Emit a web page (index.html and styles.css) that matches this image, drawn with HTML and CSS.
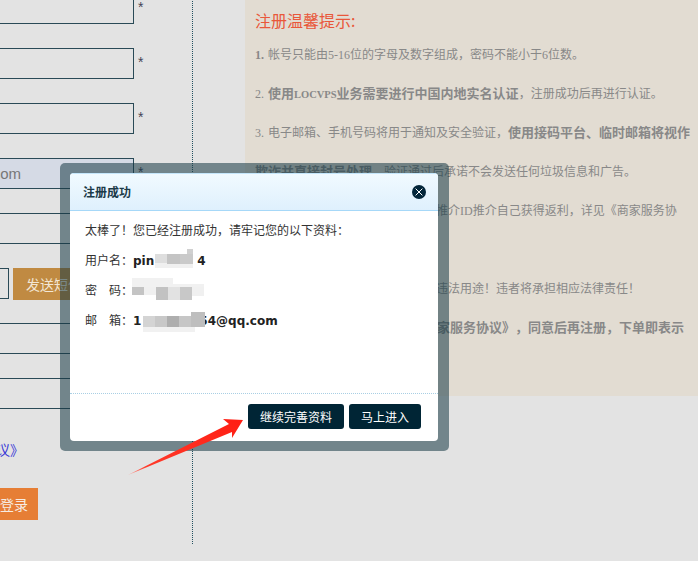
FILE: index.html
```html
<!DOCTYPE html>
<html lang="zh-CN">
<head>
<meta charset="utf-8">
<title>注册成功</title>
<link rel="stylesheet" href="styles.css">
</head>
<body>
<main class="page">
  <section class="form-col">
    <div class="row"><input class="field" type="text"><span class="star">*</span></div>
    <div class="row"><input class="field" type="text"><span class="star">*</span></div>
    <div class="row"><input class="field" type="text"><span class="star">*</span></div>
    <div class="row"><input class="field field-filled" type="text" value="54@qq.com"><span class="star">*</span></div>
    <div class="row"><input class="field" type="text"></div>
    <div class="row"><input class="field field-code" type="text"><button class="send-btn" type="button">发送短信验证码</button></div>
    <div class="row"><input class="field" type="text"></div>
    <div class="row"><input class="field" type="text"></div>
    <div class="agree"><a href="#">《商家服务协议》</a></div>
    <button class="login-btn" type="button">注册并登录</button>
  </section>
  <aside class="tips">
    <h2 class="tips-title">注册温馨提示:</h2>
    <p><b class="num">1.</b>帐号只能由5-16位的字母及数字组成，密码不能小于6位数。</p>
    <p><span class="num">2.</span><b>使用<span class="latin">LOCVPS</span>业务需要进行中国内地实名认证</b>，注册成功后再进行认证。</p>
    <p><span class="num">3.</span>电子邮箱、手机号码将用于通知及安全验证，<b>使用接码平台、临时邮箱将视作<br>欺诈并直接封号处理</b>。验证通过后承诺不会发送任何垃圾信息和广告。</p>
    <p><span class="num">4.</span>严禁使用自己的帐号或者他人的推介ID推介自己获得返利，详见《商家服务协<br>议》。</p>
    <p><span class="num">5.</span>请勿将本站服务器用于任何形式违法用途！违者将承担相应法律责任！</p>
    <p><span class="num">6.</span><b>注册前请您务必仔细阅读《商家服务协议》，同意后再注册，下单即表示</b></p>
  </aside>
</main>

<div class="dialog" role="dialog">
  <div class="dialog-inner">
    <header class="dialog-head">
      <h3 class="dialog-title">注册成功</h3>
      <svg class="close-icon" viewBox="0 0 14 14" width="14" height="14" aria-label="关闭">
        <circle cx="7" cy="7" r="7" fill="#03263a"/>
        <path d="M3.6 3.6 10.4 10.4M10.4 3.6 3.6 10.4" stroke="#fff" stroke-width="1" fill="none"/>
      </svg>
    </header>
    <div class="dialog-body">
      <p class="line">太棒了！您已经注册成功，请牢记您的以下资料：</p>
      <p class="line"><span class="label">用户名：</span><b class="value">pin<i class="gap-user"></i>4</b>
        <svg class="mosaic mosaic-user" width="40" height="20" viewBox="0 0 40 20">
          <rect x="0" y="6" width="38" height="14" fill="#f0f0f0"/>
          <rect x="0" y="6" width="12" height="9" fill="#dedede"/>
          <rect x="12" y="6" width="13" height="10" fill="#c4c4c4"/>
          <rect x="25" y="6" width="13" height="10" fill="#cacaca"/>
          <rect x="32" y="1" width="6" height="5" fill="#d0d0d0"/>
        </svg>
      </p>
      <p class="line"><span class="label">密&emsp;码：</span>
        <svg class="mosaic mosaic-pass" width="72" height="22" viewBox="0 0 72 22">
          <rect x="0" y="0" width="41" height="9" fill="#f1f1f1"/>
          <rect x="41" y="6" width="31" height="3" fill="#f1f1f1"/>
          <rect x="0" y="9" width="12" height="8" fill="#c4c4c4"/>
          <rect x="12" y="9" width="12" height="8" fill="#f0f0f0"/>
          <rect x="24" y="9" width="12" height="13" fill="#c2c2c2"/>
          <rect x="36" y="9" width="12" height="13" fill="#e2e2e2"/>
          <rect x="48" y="9" width="12" height="13" fill="#c8c8c8"/>
          <rect x="60" y="9" width="12" height="9" fill="#f0f0f0"/>
        </svg>
      </p>
      <p class="line"><span class="label">邮&emsp;箱：</span><b class="value">1<i class="gap-mail"></i>54@qq.com</b>
        <svg class="mosaic mosaic-mail" width="64" height="20" viewBox="0 0 64 20">
          <rect x="0" y="4" width="52" height="16" fill="#f1f1f1"/>
          <rect x="0" y="4" width="12" height="11" fill="#d4d4d4"/>
          <rect x="12" y="4" width="12" height="11" fill="#c8c8c8"/>
          <rect x="24" y="4" width="12" height="11" fill="#aeaeae"/>
          <rect x="36" y="4" width="12" height="11" fill="#c6c6c6"/>
          <rect x="48" y="0" width="14" height="15" fill="#bebebe"/>
        </svg>
      </p>
    </div>
    <footer class="dialog-foot">
      <button class="dark-btn" type="button">继续完善资料</button>
      <button class="dark-btn" type="button">马上进入</button>
    </footer>
  </div>
</div>

<svg class="arrow" width="118" height="60" viewBox="0 0 118 60" aria-hidden="true">
  <defs>
    <linearGradient id="arrowFill" x1="0" y1="1" x2="1" y2="0">
      <stop offset="0" stop-color="#ff9d92"/>
      <stop offset=".15" stop-color="#ff3a2a"/>
      <stop offset="1" stop-color="#ff1d12"/>
    </linearGradient>
  </defs>
  <polygon points="0,58 101,7 95,2 115,3 104,21 104,15" fill="url(#arrowFill)"/>
</svg>
</body>
</html>
```

FILE: styles.css
```css
* { box-sizing: border-box; }
html, body { margin: 0; padding: 0; height: 100%; }
body {
  position: relative;
  overflow: hidden;
  background: #e3e3e3;
  font-family: "Noto Sans CJK SC", sans-serif;
  font-size: 12px;
  text-spacing-trim: space-all;
}
.page {
  display: flex;
  align-items: flex-start;
  gap: 52px;
}

/* left form */
.form-col {
  flex: none;
  width: 193px;
  height: 551px;
  margin-top: -7px;
  border-right: 1px dotted #22505f;
}
.row {
  display: flex;
  height: 31px;
  margin-bottom: 24px;
  margin-left: -66px;
}
.field {
  flex: none;
  width: 200px;
  height: 31px;
  padding: 0;
  border: 1px solid #2a4a57;
  background: #e3e3e3;
  border-radius: 0;
  outline: none;
}
.field-filled {
  background: #d5dae5;
  font: 15px "Liberation Sans", sans-serif;
  color: #777;
  text-align: right;
  padding-right: 112px;
}
.field-code { width: 75px; }
.star {
  margin-left: 4px;
  font: 14px/29px "Liberation Sans", sans-serif;
  color: #445;
}
.send-btn {
  flex: none;
  width: 120px;
  height: 32px;
  margin-left: 4px;
  padding: 0 0 0 13px;
  border: 0;
  background: #c08a42;
  color: #f2e6d4;
  font: 14px "Noto Sans CJK SC", sans-serif;
  text-align: left;
}
.agree {
  display: flex;
  justify-content: flex-end;
  width: 100px;
  margin: 29px 0 0 -76px;
  line-height: 22px;
  font-size: 14px;
  white-space: nowrap;
}
.agree a { color: #3a3ad6; text-decoration: none; }
.login-btn {
  display: block;
  width: 98px;
  height: 32px;
  margin: 28px 0 0 -60px;
  padding: 0 10px 0 0;
  border: 0;
  background: #e67e35;
  color: #f6ece2;
  font: 14px "Noto Sans CJK SC", sans-serif;
  text-align: right;
}

/* right tips */
.tips {
  flex: 1;
  height: 396px;
  padding: 4px 0 0 10px;
  background: #e2dcd2;
  color: #888;
  font-family: "Liberation Serif", "Noto Sans CJK SC", serif;
  white-space: nowrap;
}
.tips-title {
  margin: 0;
  font: 400 16px/32px "Noto Sans CJK SC", sans-serif;
  color: #e9573a;
}
.tips p {
  margin: 0;
  font-size: 12px;
  line-height: 39px;
}
.tips b {
  font-size: 13px;
  line-height: 1;
}
.tips .num {
  display: inline-block;
  width: 13px;
  font-size: 12px;
  line-height: 1;
}
.tips .latin { font-size: 10.5px; }

/* dialog */
.dialog {
  position: absolute;
  left: 60px;
  top: 163px;
  width: 389px;
  height: 288px;
  padding: 10px 11px 10px 10px;
  border-radius: 5px;
  background: rgba(22, 56, 67, .55);
}
.dialog-inner {
  display: flex;
  flex-direction: column;
  height: 100%;
  border-radius: 4px;
  background: #fff;
  overflow: hidden;
}
.dialog-head {
  flex: none;
  display: flex;
  align-items: center;
  justify-content: space-between;
  height: 38px;
  padding: 0 12px 0 13px;
  border-bottom: 1px solid #a6d8f8;
  border-top: 1px solid #c4e6fb;
  background: linear-gradient(#f1faff, #dff0fd);
}
.dialog-title {
  margin: 0 0 2px;
  font-size: 12px;
  font-weight: 700;
  color: #1b3a48;
}
.close-icon { display: block; }
.dialog-body {
  flex: 1;
  padding: 4px 15px 0;
  color: #333;
}
.line {
  position: relative;
  margin: 0;
  height: 30px;
  line-height: 30px;
}
.label { display: inline-block; width: 48px; }
.value {
  font: 700 12px/30px "DejaVu Sans", sans-serif;
  color: #222;
}
.gap-user, .gap-mail { display: inline-block; }
.gap-user { width: 43px; }
.gap-mail { width: 58px; }
.mosaic { position: absolute; display: block; }
.mosaic-user { left: 70px; top: 3px; }
.mosaic-pass { left: 47px; top: 3px; }
.mosaic-mail { left: 58px; top: 7px; }
.dialog-foot {
  flex: none;
  display: flex;
  justify-content: flex-end;
  gap: 5px;
  height: 48px;
  padding: 10px 17px 0 0;
  border-top: 1px dotted #a9cfe4;
}
.dark-btn {
  height: 25px;
  padding: 0 12px;
  border: 0;
  border-radius: 3px;
  background: #002535;
  color: #fff;
  font: 12px "Noto Sans CJK SC", sans-serif;
}

/* annotation arrow */
.arrow {
  position: absolute;
  left: 128px;
  top: 417px;
}
```
